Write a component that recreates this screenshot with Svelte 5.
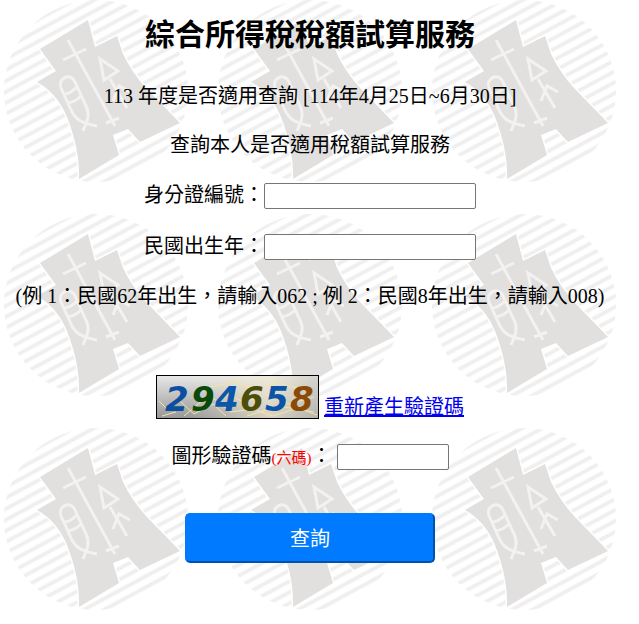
<script lang="ts">
    let idNumber = $state('');
    let birthYear = $state('');
    let code = $state('');

    const digits = [
        { char: '2', color: '#0c4f9f', x: 9 },
        { char: '9', color: '#0a4a08', x: 35 },
        { char: '4', color: '#0c57a8', x: 59 },
        { char: '6', color: '#4c4d08', x: 84 },
        { char: '5', color: '#0b55a8', x: 109 },
        { char: '8', color: '#8a4a08', x: 134 }
    ];

    // diagonal lines behind the emblem
    const stripes = Array.from({ length: 26 }, (_, i) => i * 11 - 4);

    function onSubmit(e) {
        e.preventDefault();
    }
</script>

<div class="page">
    <svg class="watermark" aria-hidden="true">
        <defs>
            <clipPath id="disc">
                <ellipse cx="96" cy="91" rx="92" ry="91" />
            </clipPath>
            <pattern id="emblem" width="214" height="214" patternUnits="userSpaceOnUse">
                <g clip-path="url(#disc)">
                    {#each stripes as y}
                        <path class="stripe stripe--edge" d="M0 {y}L200 {y - 108}" />
                        <path class="stripe" d="M0 {y}L200 {y - 108}" />
                    {/each}
                </g>
                <path class="tower-edge" d="M40 49L88 20L95 47L117 36L123 54Q132 73 147 89L180 123L140 142L128 129L113 135L119 155L79 179Q80 150 67 117Q57 93 37 82L56 71Z" />
                <path class="tower" d="M40 49L88 20L95 47L117 36L123 54Q132 73 147 89L180 123L140 142L128 129L113 135L119 155L79 179Q80 150 67 117Q57 93 37 82L56 71Z" />
                <g class="glyph">
                    <path d="M68 40L115 126M63 60L86 49M106 123L119 118" />
                    <path d="M61 88C57 78 71 72 75 82L86 106C91 116 86 123 83 131M61 88L72 112C77 121 83 123 97 126M64 94Q70 94 77 87M68 103Q75 102 81 96" />
                    <path d="M100 59L118 71L104 80ZM110 79L127 108M113 101L119 86L130 92" />
                </g>
            </pattern>
        </defs>
        <rect width="100%" height="100%" fill="url(#emblem)" />
    </svg>

    <form class="content" onsubmit={onSubmit}>
        <h1>綜合所得稅稅額試算服務</h1>
        <p>113 年度是否適用查詢 [114年4月25日~6月30日]</p>
        <p>查詢本人是否適用稅額試算服務</p>

        <div class="field">
            <label for="idNumber">身分證編號：</label>
            <input id="idNumber" type="text" bind:value={idNumber} />
        </div>
        <div class="field">
            <label for="birthYear">民國出生年：</label>
            <input id="birthYear" type="text" bind:value={birthYear} />
        </div>

        <p>(例 1：民國62年出生，請輸入062 ; 例 2：民國8年出生，請輸入008)</p>

        <div class="captcha">
            <svg class="captcha__img" viewBox="0 0 163 44">
                <defs>
                    <linearGradient id="shade" x1="0" y1="0" x2="0" y2="1">
                        <stop offset="0" stop-color="#e9e9e9" />
                        <stop offset="1" stop-color="#969696" />
                    </linearGradient>
                    <linearGradient id="glow" x1="0" y1="0" x2="1" y2="0">
                        <stop offset="0.2" stop-color="#f2ead2" stop-opacity="0" />
                        <stop offset="0.7" stop-color="#f2ead2" stop-opacity="0.7" />
                        <stop offset="1" stop-color="#c8c5bd" stop-opacity="0.6" />
                    </linearGradient>
                </defs>
                <rect width="163" height="44" fill="url(#shade)" />
                <rect width="163" height="44" fill="url(#glow)" />
                <path class="noise" d="M3 26L12 35L24 26L38 39L57 29L70 41M28 41L53 20L75 37L96 34L117 41L142 33L161 40M54 12L80 7L97 15L122 8L151 16M91 41L123 31L158 37M20 37L6 41M68 18L88 27L111 20L133 29L158 22" />
                {#each digits as { char, color, x }}
                    <text {x} y="36" fill={color}>{char}</text>
                {/each}
                <rect class="frame" x="0.5" y="0.5" width="162" height="43" />
            </svg>
            <a href="#refresh">重新產生驗證碼</a>
        </div>

        <div class="field field--code">
            <label for="code">圖形驗證碼<span>(六碼)</span>：</label>
            <input id="code" type="text" maxlength="6" bind:value={code} />
        </div>

        <button type="submit">查詢</button>
    </form>
</div>

<style>
    :global(body) {
        margin: 0;
        background: #fff;
    }

    .page {
        position: relative;
        min-height: 100vh;
        overflow: hidden;
        color: #000;
        font-family: "Liberation Serif", "Noto Sans CJK TC", serif;
        font-size: 20px;
        line-height: 24px;
    }

    .watermark {
        position: absolute;
        inset: 0;
        width: 100%;
        height: 100%;
    }

    .stripe {
        stroke: #efefef;
        stroke-width: 3;
    }

    .stripe--edge {
        stroke: #f8f8f8;
        stroke-width: 5;
    }

    .tower {
        fill: #e2e0df;
    }

    .tower-edge {
        fill: none;
        stroke: #fff;
        stroke-width: 3;
    }

    .glyph {
        fill: none;
        stroke: #f3f2f0;
        stroke-width: 3;
    }

    .content {
        position: relative;
        display: flex;
        flex-direction: column;
        align-items: center;
        padding: 17px 27px 24px 8px;
        text-align: center;
    }

    h1 {
        margin: 0 0 31px;
        font-size: 30px;
        line-height: 36px;
    }

    p {
        margin: 0 0 25px;
    }

    .field {
        display: flex;
        align-items: flex-start;
        margin: 1px 0 24px;
    }

    .field input {
        box-sizing: border-box;
        width: 212px;
        height: 26px;
        padding: 1px 2px;
        border: 1px solid #767676;
        border-radius: 2px;
        background: #fff;
        font-family: inherit;
        font-size: 20px;
    }

    .field--code {
        margin-bottom: 43px;
    }

    .field--code input {
        width: 112px;
        margin-left: 5px;
    }

    .field span {
        color: #f00;
        font-size: 15px;
    }

    .captcha {
        display: flex;
        align-items: flex-end;
        gap: 5px;
        margin: 42px 0 24px;
    }

    .captcha__img {
        width: 163px;
        height: 44px;
    }

    .captcha__img text {
        font: italic bold 34px "DejaVu Sans", sans-serif;
    }

    .noise {
        fill: none;
        stroke: #f3e5a5;
        stroke-width: 1;
    }

    .frame {
        fill: none;
        stroke: #000;
        stroke-width: 1;
    }

    a {
        color: #00e;
    }

    button {
        width: 250px;
        height: 50px;
        padding: 0 6px 2px;
        border: 2px outset #007bff;
        border-radius: 5px;
        background: #007bff;
        color: #fff;
        font-family: inherit;
        font-size: 20px;
        cursor: pointer;
    }
</style>
